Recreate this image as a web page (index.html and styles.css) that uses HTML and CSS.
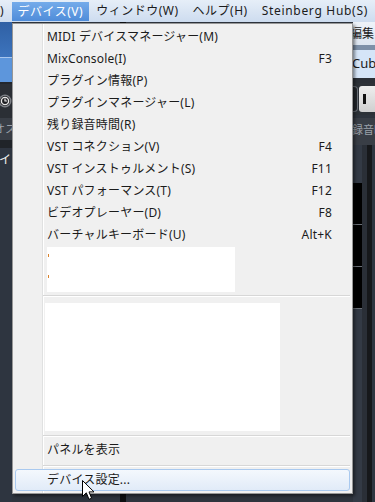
FILE: index.html
```html
<!DOCTYPE html>
<html lang="ja">
<head>
<meta charset="utf-8">
<title>デバイス</title>
<link rel="stylesheet" href="styles.css">
</head>
<body>
<div class="menubar">
  <span class="mb-item mb-cut">)</span>
  <span class="mb-item mb-active">デバイス(V)</span>
  <span class="mb-item">ウィンドウ(W)</span>
  <span class="mb-item">ヘルプ(H)</span>
  <span class="mb-item mb-latin">Steinberg Hub(S)</span>
</div>
<div class="desk">
  <div class="lstrip">
    <div class="l-blue"></div>
    <div class="l-light"></div>
    <div class="l-sep"></div>
    <div class="l-tool">
      <svg class="clock" width="12" height="16" viewBox="0 0 12 16">
        <circle cx="5" cy="8" r="6.5" fill="#7d8086"/>
        <circle cx="5" cy="8" r="5" fill="#1c1d20"/>
        <circle cx="5" cy="8" r="3.6" fill="none" stroke="#e8e8e8" stroke-width="1.4"/>
        <path d="M5 5.6V8H7" fill="none" stroke="#e8e8e8" stroke-width="1.2"/>
      </svg>
    </div>
    <div class="l-label">オス</div>
    <div class="l-dark"></div>
    <div class="l-panel">イン</div>
  </div>
  <div class="under"></div>
  <div class="rstrip">
    <div class="r-menu">編集</div>
    <div class="r-line"></div>
    <div class="r-title">Cub</div>
    <div class="r-gap"></div>
    <div class="r-tool">
      <span class="btn-dark"></span>
      <span class="btn-light"><i></i></span>
    </div>
    <div class="r-label">録音時</div>
    <div class="r-panels">
      <div class="pa">
        <div class="pbox"></div>
        <div class="pbox"></div>
        <div class="pbox"></div>
      </div>
      <div class="pa-edge"></div>
      <div class="pb"></div>
      <div class="pc"></div>
    </div>
  </div>
</div>

<div class="menu">
  <div class="mi"><span>MIDI デバイスマネージャー(M)</span></div>
  <div class="mi"><span>MixConsole(I)</span><span class="sc">F3</span></div>
  <div class="mi"><span>プラグイン情報(P)</span></div>
  <div class="mi"><span>プラグインマネージャー(L)</span></div>
  <div class="mi"><span>残り録音時間(R)</span></div>
  <div class="mi"><span>VST コネクション(V)</span><span class="sc">F4</span></div>
  <div class="mi"><span>VST インストゥルメント(S)</span><span class="sc">F11</span></div>
  <div class="mi"><span>VST パフォーマンス(T)</span><span class="sc">F12</span></div>
  <div class="mi"><span>ビデオプレーヤー(D)</span><span class="sc">F8</span></div>
  <div class="mi"><span>バーチャルキーボード(U)</span><span class="sc">Alt+K</span></div>
  <div class="blank1"><i></i><i></i></div>
  <div class="sep sep-a"></div>
  <div class="blank2"></div>
  <div class="sep"></div>
  <div class="mi"><span>パネルを表示</span></div>
  <div class="sep"></div>
  <div class="mi hover"><span>デバイス設定...</span></div>
</div>

<svg class="cursor" width="13" height="21" viewBox="0 0 13 21">
  <path d="M0.5 0.5 L0.5 16.5 L4.3 12.8 L7 19.3 L9.6 18.2 L7 11.9 L12 11.9 Z" fill="#fff" stroke="#000" stroke-width="1" stroke-linejoin="miter"/>
</svg>
</body>
</html>
```

FILE: styles.css
```css
* { box-sizing: border-box; }
html, body { margin: 0; padding: 0; }
body {
  width: 375px;
  height: 502px;
  overflow: hidden;
  position: relative;
  background: #2e343d;
  font-family: "Noto Sans", "Noto Sans CJK JP", sans-serif;
  font-size: 12px;
  color: #1b1b1b;
}

/* top menubar */
.menubar {
  height: 22px;
  display: flex;
  align-items: stretch;
  background: linear-gradient(#e6eef8, #cddcef);
  white-space: nowrap;
  overflow: hidden;
  letter-spacing: 0.5px;
}
.mb-item {
  display: flex;
  align-items: center;
  padding: 0 7px;
  line-height: 1;
}
.mb-cut { width: 12px; padding: 0; }
.mb-latin { letter-spacing: 0.7px; }
.mb-active {
  width: 80px;
  padding: 0;
  justify-content: center;
  margin: 2px 0 1px;
  background: linear-gradient(#74abea, #4f8cd9);
  color: #fff;
}

/* application behind */
.desk {
  display: flex;
  height: 480px;
}
.lstrip {
  width: 12px;
  display: flex;
  flex-direction: column;
  overflow: hidden;
  white-space: nowrap;
}
.l-blue { height: 35px; background: linear-gradient(#2f60a4, #3d74bd); }
.l-light { height: 25px; border-top: 1px solid #a9c7ee; background: #5d96dc; }
.l-sep { height: 2px; background: #23272d; }
.l-tool {
  height: 34px;
  background: #2b2f35;
  display: flex;
  align-items: center;
}
.clock { display: block; }
.l-label {
  height: 22px;
  background: #393e46;
  color: #9ba1a9;
  font-size: 11px;
  line-height: 22px;
  text-indent: -6px;
}
.l-dark { height: 8px; background: #202429; }
.l-panel {
  flex: 1;
  background: #2e3540;
  color: #f2f2f2;
  line-height: 16px;
  padding-top: 4px;
  text-indent: -1px;
}

.under {
  flex: 1;
  background: linear-gradient(to right, transparent 108px, #0e0f11 108px, #0e0f11 114px, transparent 114px), #2e343d;
}

.rstrip {
  width: 22px;
  display: flex;
  flex-direction: column;
  overflow: hidden;
  white-space: nowrap;
}
.r-menu {
  height: 23px;
  background: linear-gradient(#eef3f9, #dce5f0);
  line-height: 23px;
  text-indent: -3px;
}
.r-line { height: 5px; background: #7d90a8; }
.r-title {
  height: 28px;
  background: #d5e5f8;
  line-height: 26px;
  text-indent: -1px;
  font-size: 13px;
}
.r-gap { height: 5px; background: #2b3037; }
.r-tool {
  height: 32px;
  background: #2d3238;
  display: flex;
  align-items: center;
  gap: 1px;
}
.btn-dark {
  width: 5px;
  height: 26px;
  border: 1px solid #6b7078;
  border-left: 0;
  border-radius: 0 4px 4px 0;
  background: #22262b;
}
.btn-light {
  flex: 1;
  height: 26px;
  border-radius: 3px 0 0 3px;
  background: linear-gradient(#eeeeee, #cfcfcf);
  display: flex;
  align-items: center;
  padding-left: 4px;
}
.btn-light i {
  display: block;
  width: 3px;
  height: 10px;
  background: #111;
}
.r-label {
  height: 27px;
  margin-top: 3px;
  background: #393e46;
  color: #9ba1a9;
  font-size: 11px;
  line-height: 24px;
  text-indent: -1px;
}
.r-panels {
  flex: 1;
  display: flex;
}
.pa {
  width: 9px;
  background: #333a45;
  padding-top: 38px;
}
.pbox {
  height: 42px;
  background: #000;
  border-bottom: 1px solid #6a6f76;
}
.pa-edge { width: 5px; background: #2a2f37; }
.pb { width: 5px; background: #16181b; }
.pc { width: 3px; background: #2e3540; }

/* dropdown menu (overlay) */
.menu {
  position: absolute;
  left: 12px;
  top: 23px;
  width: 341px;
  border: 1px solid #979797;
  padding: 2px;
  background:
    linear-gradient(to right, transparent 29px, #e0e1e1 29px, #e0e1e1 30px, #ffffff 30px, #ffffff 31px, transparent 31px),
    #f0f0f0;
  box-shadow: 2px 2px 3px rgba(0, 0, 0, 0.45);
  display: flex;
  flex-direction: column;
}
.mi {
  height: 22px;
  display: flex;
  align-items: center;
  justify-content: space-between;
  padding: 0 18px 0 32px;
  white-space: nowrap;
  line-height: 1;
  letter-spacing: 0.2px;
}
.sc { text-align: right; }
.mi.hover {
  border: 1px solid #a9c9ef;
  border-radius: 3px;
  padding-left: 31px;
  background: linear-gradient(#f4f8fd, #e1ebf8);
}
.blank1 {
  margin: 1px 0 0 32px;
  width: 188px;
  height: 45px;
  background: #fff;
  display: flex;
  flex-direction: column;
  gap: 18px;
  padding: 7px 0 0 1px;
}
.blank1 i {
  display: block;
  width: 1px;
  height: 3px;
  background: #d9822b;
}
.sep {
  height: 8px;
  margin-left: 28px;
  padding-top: 4px;
}
.sep::after {
  content: "";
  display: block;
  border-top: 1px solid #d7d7d7;
  border-bottom: 1px solid #ffffff;
}
.sep.sep-a { height: 11px; padding-top: 3px; }
.blank2 {
  margin-left: 30px;
  width: 235px;
  height: 128px;
  background: #fff;
}

.cursor {
  position: absolute;
  left: 82px;
  top: 480px;
}
```
